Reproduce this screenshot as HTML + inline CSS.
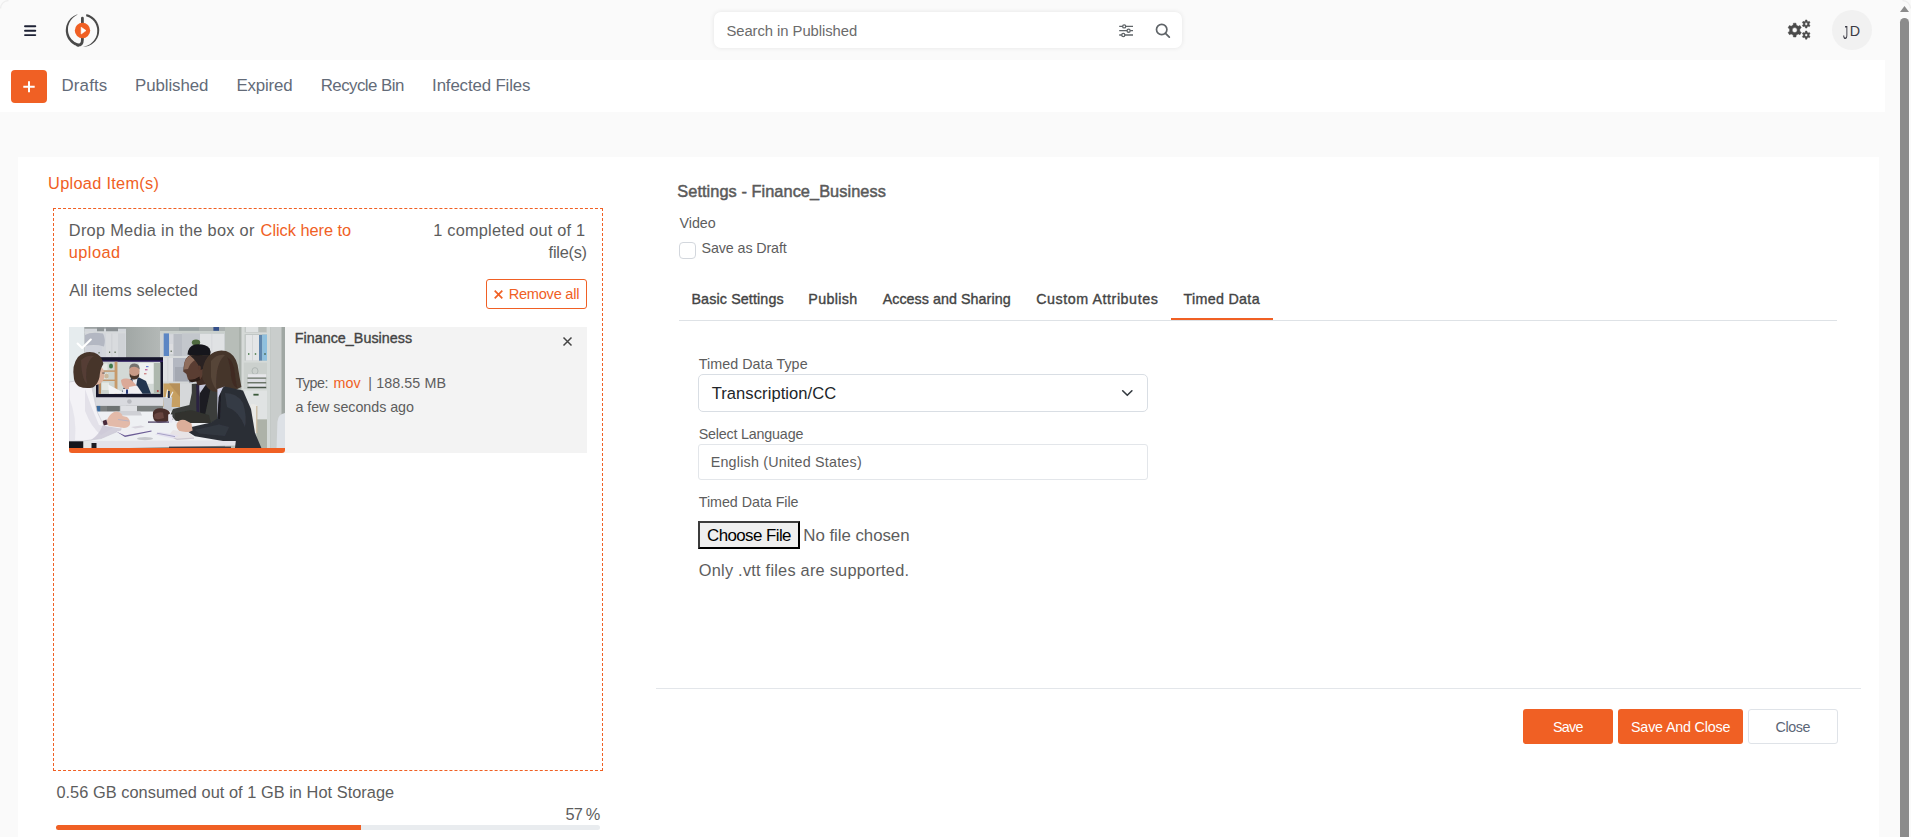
<!DOCTYPE html>
<html lang="en">
<head>
<meta charset="utf-8">
<title>Upload Item(s)</title>
<style>
*{box-sizing:border-box;margin:0;padding:0}
html,body{width:1911px;height:837px;overflow:hidden;background:#fafafa}
body{position:relative;font-family:"Liberation Sans","DejaVu Sans",sans-serif;color:#5d5d5d;font-size:16px}
.a,.t{position:absolute}
.t{white-space:nowrap;line-height:20px;height:20px}
svg{position:absolute;overflow:visible}
#search{left:714px;top:12px;width:468px;height:36px;background:#fff;border-radius:7px;box-shadow:0 0 5px rgba(0,0,0,.09)}
#avatar{left:1832px;top:10px;width:40px;height:40px;border-radius:50%;background:#f1f1f1}
#nav{left:0;top:60px;width:1885px;height:52px;background:#fff}
#plus{left:11px;top:70px;width:36px;height:33px;background:#f06024;border-radius:4px}
#card{left:18px;top:157px;width:1861px;height:680px;background:#fff}
#drop{left:53px;top:208px;width:550px;height:563px;border:1px dashed #f06024}
#item{left:69px;top:327px;width:518px;height:126px;background:#f3f3f3}
#thumbbar{left:69px;top:448px;width:216px;height:5px;background:#f06024;border-radius:0 0 3px 3px}
#rmall{left:486px;top:279px;width:101px;height:30px;border:1px solid #f06024;border-radius:3px;background:#fff}
#bar{left:56px;top:825px;width:544px;height:5px;border-radius:3px;background:#e9ecef}
#barfill{left:56px;top:825px;width:305px;height:5px;border-radius:3px 0 0 3px;background:#f06024}
#tabline{left:679px;top:320px;width:1158px;height:1px;background:#dee2e6}
#tabact{left:1171px;top:318px;width:102px;height:2px;background:#f06024}
.box{background:#fff;border:1px solid #d9dee4;border-radius:5px}
#hr{left:656px;top:688px;width:1205px;height:1px;background:#e3e6ea}
.btn{top:709px;height:35px;border-radius:3px;background:#f06024}
#sbthumb{left:1900px;top:18px;width:9px;height:830px;border-radius:5px;background:#8b8b8b}
</style>
</head>
<body>
<!-- header -->
<svg style="left:24px;top:25px" width="13" height="12" viewBox="0 0 13 12"><g stroke="#1e2235" stroke-width="1.9" stroke-linecap="round"><path d="M1 1.3H11.3M1 5.7H11.3M1 10.1H11.3"/></g></svg>
<svg style="left:60px;top:10px" width="46" height="40" viewBox="60 10 46 40"><path d="M86.5 14.1L87.7 14.4L88.8 14.8L89.9 15.3L90.9 15.9L91.9 16.5L92.9 17.2L93.8 18.0L94.6 18.8L95.4 19.7L96.1 20.6L96.7 21.6L97.3 22.6L97.8 23.7L98.3 24.8L98.6 25.9L98.9 27.1L99.1 28.2L99.2 29.4L99.2 30.6L99.1 31.8L99.0 32.9L98.8 34.1L98.5 35.2L98.1 36.3L97.6 37.4L97.1 38.5L96.4 39.5L95.8 40.4L95.0 41.4L94.2 42.2L93.3 43.0L92.4 43.7L91.4 44.4L90.4 45.0L89.4 45.5L88.3 46.0L87.1 46.3L86.0 46.6L84.8 46.8L83.7 47.0L83.6 46.7L84.8 46.4L85.9 46.1L87.0 45.7L88.0 45.3L89.0 44.8L90.0 44.2L90.9 43.5L91.7 42.8L92.5 42.0L93.2 41.2L93.9 40.4L94.6 39.5L95.2 38.6L95.7 37.7L96.1 36.7L96.5 35.7L96.8 34.7L97.0 33.7L97.1 32.6L97.2 31.6L97.2 30.5L97.2 29.5L97.1 28.5L96.9 27.5L96.6 26.4L96.3 25.5L95.9 24.5L95.5 23.6L94.9 22.7L94.4 21.8L93.7 21.0L93.0 20.3L92.3 19.6L91.5 18.9L90.6 18.3L89.8 17.8L88.9 17.3L87.9 16.9L87.0 16.6L86.0 16.3Z" fill="#4a4a4a"/><path d="M77.3 14.4L76.3 14.8L75.3 15.2L74.3 15.7L73.4 16.3L72.5 16.9L71.7 17.6L70.8 18.3L70.1 19.1L69.4 20.0L68.7 20.8L68.1 21.8L67.6 22.7L67.2 23.7L66.8 24.7L66.4 25.8L66.2 26.8L66.0 27.9L65.9 29.0L65.8 30.1L65.8 31.2L65.9 32.3L66.1 33.3L66.3 34.4L66.6 35.5L67.0 36.5L67.4 37.5L67.9 38.5L68.5 39.4L69.1 40.3L69.8 41.1L70.5 42.0L71.3 42.7L72.2 43.4L73.0 44.1L74.0 44.7L74.9 45.2L75.9 45.6L76.9 46.0L78.0 46.4L79.0 46.6L79.6 43.9L78.7 43.7L77.8 43.4L77.0 43.1L76.1 42.8L75.3 42.3L74.5 41.9L73.8 41.3L73.1 40.8L72.4 40.1L71.7 39.5L71.1 38.8L70.6 38.0L70.1 37.3L69.6 36.4L69.2 35.6L68.9 34.7L68.6 33.8L68.3 32.9L68.2 32.0L68.0 31.1L68.0 30.1L68.0 29.2L68.0 28.2L68.1 27.2L68.2 26.3L68.5 25.3L68.8 24.4L69.1 23.5L69.5 22.6L70.0 21.7L70.5 20.8L71.0 20.0L71.7 19.2L72.3 18.4L73.1 17.7L73.9 17.0L74.7 16.4L75.6 15.8L76.5 15.3L77.5 14.8Z" fill="#4a4a4a"/><path d="M82.4 18.2V39.8Q82.4 45.4 77.6 45.2" stroke="#4a4a4a" stroke-width="2.8" stroke-linecap="round" fill="none"/><circle cx="82.5" cy="30.5" r="7.7" fill="#f06024"/><path d="M81.2 27.2L86 30.6L81.2 34Z" fill="#fff" stroke="#fff" stroke-width="0.6" stroke-linejoin="round"/></svg>
<div id="search" class="a"></div>
<svg style="left:1116px;top:22px" width="58" height="18" viewBox="1116 22 58 18"><g stroke="#5f6468" stroke-width="1.3" fill="none"><path d="M1119.2 26.4H1133M1119.2 30.7H1133M1119.2 35H1133"/><circle cx="1124.2" cy="26.4" r="1.55" fill="#fff"/><circle cx="1128.6" cy="30.7" r="1.55" fill="#fff"/><circle cx="1123.3" cy="35" r="1.55" fill="#fff"/></g><circle cx="1161.7" cy="29.5" r="5.2" stroke="#5f6468" stroke-width="1.7" fill="none"/><path d="M1165.5 33.4L1169.3 37.1" stroke="#5f6468" stroke-width="1.8" stroke-linecap="round"/></svg>
<svg style="left:1785px;top:18px" width="28" height="24" viewBox="1785 18 28 24"><path d="M1793.20 25.12L1793.39 23.22L1796.01 23.22L1796.20 25.12L1798.26 26.31L1800.00 25.53L1801.31 27.80L1799.76 28.91L1799.76 31.29L1801.31 32.40L1800.00 34.67L1798.26 33.89L1796.20 35.08L1796.01 36.98L1793.39 36.98L1793.20 35.08L1791.14 33.89L1789.40 34.67L1788.09 32.40L1789.64 31.29L1789.64 28.91L1788.09 27.80L1789.40 25.53L1791.14 26.31ZM1792.20 30.10a2.5 2.5 0 1 0 5.0 0a2.5 2.5 0 1 0 -5.0 0ZM1805.33 21.13L1805.43 19.97L1806.97 19.97L1807.07 21.13L1808.25 21.81L1809.30 21.32L1810.07 22.65L1809.12 23.31L1809.12 24.69L1810.07 25.35L1809.30 26.68L1808.25 26.19L1807.07 26.87L1806.97 28.03L1805.43 28.03L1805.33 26.87L1804.15 26.19L1803.10 26.68L1802.33 25.35L1803.28 24.69L1803.28 23.31L1802.33 22.65L1803.10 21.32L1804.15 21.81ZM1804.80 24.00a1.4 1.4 0 1 0 2.8 0a1.4 1.4 0 1 0 -2.8 0ZM1805.33 32.23L1805.43 31.07L1806.97 31.07L1807.07 32.23L1808.25 32.91L1809.30 32.42L1810.07 33.75L1809.12 34.41L1809.12 35.79L1810.07 36.45L1809.30 37.78L1808.25 37.29L1807.07 37.97L1806.97 39.13L1805.43 39.13L1805.33 37.97L1804.15 37.29L1803.10 37.78L1802.33 36.45L1803.28 35.79L1803.28 34.41L1802.33 33.75L1803.10 32.42L1804.15 32.91ZM1804.80 35.10a1.4 1.4 0 1 0 2.8 0a1.4 1.4 0 1 0 -2.8 0Z" fill="#4a4a4a" fill-rule="evenodd" stroke="#4a4a4a" stroke-width="0.5" stroke-linejoin="round"/></svg>
<div id="avatar" class="a"></div>

<!-- nav -->
<div id="nav" class="a"></div>
<div id="plus" class="a"></div>
<svg style="left:23px;top:81px" width="12" height="12" viewBox="0 0 12 12"><path d="M6 0.3V11.3M0.3 5.8H11.7" stroke="#fff" stroke-width="2" fill="none"/></svg>

<!-- card -->
<div id="card" class="a"></div>
<div id="drop" class="a"></div>
<div id="rmall" class="a"></div>
<svg style="left:494px;top:289.5px" width="9" height="9" viewBox="0 0 9 9"><path d="M0.7 0.7L8.3 8.3M8.3 0.7L0.7 8.3" stroke="#f06024" stroke-width="1.7" fill="none"/></svg>
<div id="item" class="a"></div>
<svg style="left:69px;top:327px" width="216" height="121" viewBox="0 0 216 121"><defs><filter id="bl" x="-5%" y="-5%" width="110%" height="110%"><feGaussianBlur stdDeviation="0.7"/></filter><linearGradient id="wg" x1="0" x2="1" y1="0" y2="0"><stop offset="0" stop-color="#a1a7a5"/><stop offset="1" stop-color="#b3b8b6"/></linearGradient><clipPath id="cp"><rect x="0" y="0" width="216" height="121"/></clipPath></defs><g clip-path="url(#cp)"><rect width="216" height="121" fill="#8d9492"/><g filter="url(#bl)"><rect x="0" y="0" width="216" height="121" fill="#8d9492"/><rect x="0" y="0" width="15.5" height="121" fill="#e6ecee"/><rect x="15.5" y="0" width="41.5" height="80" fill="#d3d6db"/><rect x="15.5" y="0" width="41.5" height="1.8" fill="#9da3a4"/><rect x="28" y="0.5" width="7" height="4.0" fill="#8e9496"/><rect x="37" y="0.5" width="12" height="4.0" fill="#8b9093"/><rect x="15.5" y="4.5" width="41.5" height="1.8" fill="#d6d9db"/><rect x="37" y="6.5" width="12" height="23.5" fill="#d9dbde"/><rect x="42.6" y="6.5" width="0.6" height="23.5" fill="#c6c8cc"/><rect x="49" y="6.5" width="7" height="23.5" fill="#cfd2d6"/><path d="M16 8Q22 4.5 34 6.5Q37 12 35 19.5Q26 17 16 19Z" fill="#b3b7c2"/><rect x="17" y="19" width="16" height="11" fill="#d0d3db"/><rect x="40" y="24.5" width="1.2" height="1.5" fill="#5a6a55"/><rect x="45.5" y="24.5" width="1.2" height="1.5" fill="#5a6a55"/><rect x="29.5" y="25" width="1.1" height="1.5" fill="#5a6a55"/><rect x="57" y="0" width="34" height="31" fill="url(#wg)"/><rect x="91" y="0" width="65" height="90" fill="#cdd1d3"/><rect x="91" y="0" width="65" height="4" fill="#aab0af"/><rect x="144.4" y="0" width="5.6" height="3.8" fill="#34508a"/><rect x="110" y="0.4" width="20" height="3.2" fill="#9aa3a4"/><rect x="91" y="4" width="65" height="2.4" fill="#c9cfcc"/><rect x="94.7" y="6.4" width="5.3" height="22.6" fill="#5b86c4"/><path d="M100 7.5L109 6.8L106.5 17L101 17Z" fill="#d5d7dc"/><rect x="100.5" y="17" width="4.0" height="10" fill="#dcdde0"/><rect x="104.5" y="7" width="8.5" height="22" fill="#b9bdc4"/><rect x="101.6" y="23.5" width="1.2" height="1.5" fill="#5a6a55"/><rect x="113" y="6.4" width="18" height="22.6" fill="#c3c7cc"/><rect x="131" y="7" width="24" height="20" fill="#e0e2e4"/><rect x="142.6" y="7" width="0.6" height="20" fill="#cfd1d4"/><ellipse cx="127" cy="15.5" rx="4.2" ry="3" fill="#4f6b3f"/><rect x="91" y="29" width="65" height="2" fill="#d7dadb"/><rect x="94" y="31" width="10" height="24" fill="#dfe0e3"/><rect x="98.6" y="31" width="0.6" height="24" fill="#c9cbcf"/><rect x="104" y="31" width="14" height="24" fill="#b3b7c1"/><rect x="106" y="40" width="18" height="16" fill="#a4a8b2"/><rect x="91" y="54.5" width="29" height="2.0" fill="#d3d6d7"/><rect x="94.4" y="56.5" width="16.6" height="23.5" fill="#c7a062"/><path d="M100 56.5L111 56.5L111 70Z" fill="#b6905a"/><rect x="111" y="56.5" width="13" height="27.5" fill="#d6d8da"/><rect x="156" y="0" width="16.4" height="121" fill="#b7bdb8"/><rect x="170" y="0" width="2.4" height="121" fill="#a9b0aa"/><rect x="172.4" y="0" width="28.0" height="121" fill="#d6dad8"/><rect x="175.6" y="0" width="22.4" height="5.6" fill="#c3c8c6"/><rect x="177" y="0" width="12" height="5" fill="#dfe2e2"/><rect x="190" y="0" width="7" height="5" fill="#b9beba"/><rect x="175.6" y="7.2" width="22.4" height="26.4" fill="#bcc2c0"/><rect x="176.8" y="8" width="13.2" height="25.6" fill="#e4e6e7"/><rect x="183.2" y="8" width="0.6" height="25.6" fill="#c9cccd"/><rect x="190" y="8" width="3.2" height="25.6" fill="#5f86ad"/><rect x="193.2" y="7.6" width="5.4" height="26.0" fill="#8fc0de"/><rect x="179" y="26.2" width="1.4" height="1.6" fill="#4a7a4a"/><rect x="185.8" y="26.2" width="1.4" height="1.6" fill="#4a7a4a"/><rect x="195.2" y="26.2" width="1.6" height="1.6" fill="#4a6a5a"/><rect x="174.8" y="35.6" width="23.2" height="26.4" fill="#cbd0cd"/><ellipse cx="186" cy="44" rx="3" ry="3.4" fill="none" stroke="#aab0ae" stroke-width="0.8"/><rect x="179" y="47.2" width="18.2" height="3.3" fill="#e6e6ea"/><rect x="178.4" y="50.6" width="18.8" height="1.0" fill="#5a6358"/><rect x="179" y="52" width="17" height="3" fill="#dcdde2"/><rect x="178.4" y="55.2" width="18.8" height="1.2" fill="#566054"/><rect x="179.5" y="56.8" width="17.0" height="2.8" fill="#e2e2e8"/><rect x="178.4" y="59.8" width="18.8" height="1.4" fill="#4a5448"/><rect x="175.6" y="63.6" width="22.4" height="28.8" fill="#e0e3e3"/><rect x="184.4" y="66.8" width="5.2" height="1.8" fill="#3a5a3a"/><rect x="175.6" y="92.4" width="22.4" height="28.6" fill="#adb2a8"/><rect x="175.6" y="92.4" width="12.0" height="28.6" fill="#c9cdc9"/><rect x="200.4" y="0" width="15.6" height="121" fill="#a0a7a3"/><rect x="198" y="0" width="3.5" height="121" fill="#d4d9d7"/><rect x="201.5" y="0" width="11.0" height="121" fill="#cdd2d0" opacity="0.9"/><path d="M207.6 121L208.4 95Q209 87 216 86L216 121Z" fill="#dde1e6"/><path d="M181.6 77.5Q185 76 188 78.5L188 106L183 106Z" fill="#e9e9e6"/><rect x="187.2" y="79" width="1.2" height="27" fill="#c9b79c"/><rect x="27" y="78.5" width="67" height="6.5" fill="#7c8080"/><rect x="28" y="78.5" width="3.2" height="6.5" fill="#3b6a9c"/><rect x="38" y="79" width="12" height="5.5" fill="#6d7272"/><path d="M28 84.4L170 84.4L170 100L166.8 113.5L166.8 117.5L24 121L18 121L22.4 114Z" fill="#eef0f3"/><path d="M22.4 114L166.8 113.2L166.8 118.4L60 121L20 121Z" fill="#e3e3ea"/><rect x="100" y="119.6" width="62" height="1.4" fill="#3a3a44"/><rect x="0" y="113" width="14.5" height="8" fill="#15151d"/><rect x="14.5" y="108" width="8.5" height="13" fill="#e4e6e8"/><rect x="22.5" y="116" width="5.0" height="5" fill="#1b1b24"/><rect x="27" y="30.2" width="67" height="40.4" fill="#15122b"/><rect x="27" y="33.4" width="67" height="1.6" fill="#2d1a5c"/><rect x="29.8" y="34.8" width="61.5" height="32.0" fill="#d3d9d6"/><rect x="29.8" y="34.8" width="19.0" height="32.0" fill="#cdd4cf"/><rect x="45.6" y="34.8" width="2.8" height="32.0" fill="#c79a6b"/><rect x="29.8" y="34.8" width="2.2" height="32.0" fill="#b98d60"/><rect x="31" y="43.4" width="15" height="1.4" fill="#c29468"/><rect x="31" y="52.6" width="15" height="1.4" fill="#c29468"/><rect x="33" y="36.5" width="5.5" height="6.5" fill="#e6e9e6"/><rect x="33" y="46" width="6" height="6" fill="#dfe4e0"/><rect x="33" y="55.5" width="7" height="7.5" fill="#e4e8e4"/><ellipse cx="42" cy="39" rx="2" ry="2.6" fill="#3f7a4a"/><ellipse cx="37.5" cy="49" rx="2.2" ry="2.6" fill="#c9b79a"/><rect x="69.6" y="36" width="15.2" height="20.8" fill="#eef0f0"/><rect x="77" y="39" width="2.5" height="1.2" fill="#6a7fd0"/><rect x="76" y="42" width="2.5" height="1.4" fill="#c46aa0"/><rect x="75" y="46" width="2.5" height="1.4" fill="#d08a8a"/><rect x="84.8" y="36" width="6.5" height="30.8" fill="#aeb8ae"/><ellipse cx="88.8" cy="64" rx="1" ry="1" fill="#b03a3a"/><path d="M62.4 51L70 50.5L77 54L82 66.8L52 66.8L56 58Z" fill="#24344f"/><path d="M63.5 51.5L68.5 51.2L67 60L64 60Z" fill="#e8e8ee"/><ellipse cx="65.4" cy="44.4" rx="5.2" ry="7.4" fill="#c99a86"/><path d="M60.2 42Q60.5 36.6 65.6 36.6Q70.6 36.8 70.8 42.5Q68 39.5 65 39.8Q62 39.8 60.2 42Z" fill="#75726e"/><path d="M60.6 46.5Q62 49 65.4 49Q68.6 49 70.2 46.5L70 49.5Q68 52.6 65.4 52.6Q62.4 52.6 60.8 49.5Z" fill="#4a342b"/><path d="M52 53Q56 50.5 62 52.5L67 58Q68 62 64 63.5L56 62Q52 58 52 53Z" fill="#dba998"/><path d="M39.2 57.5L56.8 66.8L40 66.8Z" fill="#f1f2f4"/><rect x="53.6" y="62" width="6.4" height="4.8" fill="#e9e9f0"/><rect x="57" y="62.5" width="2" height="4.3" fill="#2a3a78"/><rect x="62" y="62.5" width="2" height="4.3" fill="#2a3a78"/><path d="M60 60L68 58.5L73.6 66.8L60 66.8Z" fill="#f0eef2"/><rect x="27" y="70.4" width="67" height="8.4" fill="#d9dadf"/><ellipse cx="60.4" cy="74.5" rx="2.3" ry="2.3" fill="#b9bac0"/><rect x="51.2" y="78.8" width="16.8" height="5.8" fill="#dfe0e4"/><path d="M50.4 84.4L71.2 84.4L73 88.4L49 88.4Z" fill="#cfd0d5"/><path d="M94 70L103.2 70L102.4 83.5L95 83.5Z" fill="#c4c8cf"/><path d="M96.5 71L98 62.5L99 62.8L98 71Z" fill="#eceef2"/><path d="M100 71L103.5 64.5L104.4 65L101.6 71Z" fill="#eceef2"/><rect x="99" y="64" width="1.8" height="7" fill="#2c3550"/><path d="M122.8 57L149.2 55L150 92L142 96L122 96L106 93.5L100 91L104 82L120.4 78L122.8 66Z" fill="#3a3e3a"/><path d="M129 55L139 54L137 68L131 70Z" fill="#c4c6d8"/><path d="M127.2 57L130.2 57L130.6 88L127.4 88Z" fill="#2a2440"/><path d="M131 66L138 56L142 60L136 88L131 88Z" fill="#1d1d20"/><path d="M106 86L122 83L140 88L142 96L122 96L106 93.5Z" fill="#30332f"/><path d="M126 50L137 46L138.5 57L128.5 58.5Z" fill="#3e2920"/><path d="M114.6 40Q115.5 30 122 27.5L133 27L135 40Q135.5 50 129 53.8Q122 55 119 52.6L117.4 47L114.2 44.6Z" fill="#5a3e33"/><path d="M115.4 36Q117 29.5 123 28L126 33Q121 36 119 42L115 42.5Z" fill="#8f6d5c"/><path d="M120 52.6Q125 53.5 130.5 49.5L131 53Q126 56 120.4 54.5Z" fill="#2a1a16"/><path d="M118.5 27.5Q119 19.5 126 17.6Q136 16.4 140.6 21.5Q142.6 25 141 28.5L128 29Q122 28.6 118.5 27.5Z" fill="#15151a"/><path d="M121 28.5L141 28Q141.5 36 137 41L131.5 43Q129 35 121 28.5Z" fill="#2a2320"/><ellipse cx="130.4" cy="41" rx="1.5" ry="2.6" fill="#5a3a2e"/><path d="M84 85Q86 80.6 92 81.2Q99 81.6 101 86L101 93.5Q96 96.4 88 95.4Q83 93.5 84 85Z" fill="#4a2f2b"/><path d="M85 88Q88 84.5 94 85.4L95 91Q90 93 85.5 91.5Z" fill="#67453f"/><rect x="99.2" y="87.4" width="4.2" height="8.2" fill="#e6e6f0"/><rect x="79" y="94.4" width="21" height="1.4" fill="#5b5070"/><path d="M100.5 86.5L108 95.5L107 96.2L99.8 87.2Z" fill="#e8e8f0"/><path d="M133.5 52Q132 38 139 29.5Q147 21.5 157 24Q166 27 168.6 38Q170.5 50 172.4 60Q166 64.5 158 62.6Q150 66 144 64.5Q138 62 136.5 57Z" fill="#45352c"/><path d="M142 34Q148 26.5 156 28Q150 33 148 44Q146.5 55 147.5 63Q143.5 58 142 50Z" fill="#6a5445" opacity="0.5"/><path d="M158 30Q165 34 166 46Q167 56 168.5 61Q163.5 60 162 50Q161.5 38 158 30Z" fill="#3f2b22" opacity="0.8"/><path d="M148.4 62L155.6 59.6L152 92L148.4 92Z" fill="#cfd0e6"/><path d="M155.6 59.6L174 63.6L182 82L186 106L192.4 121L166 121L166.8 114L154 114L126 109.2L119.6 105.2L120.4 100.4L142 95.6L148.4 91.6L150.5 68L154 60.4Z" fill="#2b2e36"/><path d="M156 66Q168 66 174 76Q178 90 176 100Q170 84 158 80Z" fill="#3a3e48" opacity="0.8"/><path d="M126 103L150 97.5L160 100L156 109L130 106.5Z" fill="#353943" opacity="0.8"/><path d="M148.4 91.6L149.6 70L152 66L151 92Z" fill="#1a1b22"/><path d="M107.6 97Q110 91.6 116 93L122.5 96.5L123.6 103.5Q118 106.6 111 104.5Q107 102 107.6 97Z" fill="#dcae9a"/><path d="M104 103L120 105.5L125 110.5L108 111.6L100 108Z" fill="#e7e3e6"/><path d="M100 108L108 111.6L125 110.5L125 111.8L108 113L100 109.2Z" fill="#cfc9d2"/><path d="M0 55L10 53.5L22.4 58L28 84.4L33.6 96.4L52 99.6L52 103L32 111.6L14.4 114L0 114Z" fill="#f3f2f6" stroke="#cdcbd6" stroke-width="0.7"/><path d="M16 62Q22 80 30 98L44 101L32 108Q22 100 16 84Z" fill="#dcdae4" opacity="0.7"/><path d="M0 70Q8 90 6 113L0 113Z" fill="#dedce6" opacity="0.6"/><path d="M33.6 98.5L52 101.6L52 103L32 111.6L22 113Q30 108 33.6 98.5Z" fill="#c9c6d4" opacity="0.8"/><path d="M26 40Q32 38 34.6 43L35.4 50Q34 56 29 57.5L24 59L22 50Z" fill="#dcb39f"/><rect x="33.2" y="45.5" width="2.6" height="1.1" fill="#6b5a55"/><path d="M5 52Q2.5 38 9 30Q16 23.5 25 25.5Q33 28 34.4 37Q31 42 30.5 50Q29 57 24 60.5Q16 62 10 59.5Q6 57 5 52Z" fill="#46342c"/><path d="M12 33Q18 27.5 25 29Q19 33 17.5 42Q16.5 50 18 57Q12.5 52 12 33Z" fill="#5e463a" opacity="0.6"/><path d="M38.4 92Q42 85.4 47 84.6Q52.5 85 53.6 89L58 90Q62 93 60.8 98Q58 102 52 100.6L40 99Q36.6 96.5 38.4 92Z" fill="#e3baa9"/><path d="M33.6 94L37.4 92.6L38.6 97.5L34.8 98.6Z" fill="#4a2b3a"/><path d="M49 92L60 93.6L60 94.4L49 93Z" fill="#b9b2c2"/><path d="M47.2 104.5L74 101.2L82.4 103.5L56 108.6Z" fill="#f0eff4"/><path d="M47.2 104.5L56 108.6L82.4 103.5L82.6 104.6L56 110Z" fill="#6b5b95"/><path d="M62 100L72 98.4L76 100L66 101.6Z" fill="#d9d6de"/><ellipse cx="76" cy="111.6" rx="8" ry="1.7" fill="#c6c7cd"/><path d="M128 106L146 112L140 115L122 109Z" fill="#d9d5e4" opacity="0.0"/><path d="M90 105L110 108.5L104 111.5L86 107.5Z" fill="#e2dfee"/><path d="M88 106.2L106 109.6" fill=" none" stroke="#8d86b5" stroke-width="0.7"/><path d="M8.6 16.6L13.2 21L21.8 12.6" fill="none" stroke="#fff" stroke-width="2.1" stroke-linecap="round" stroke-linejoin="round"/></g></g></svg>
<div id="thumbbar" class="a"></div>
<svg style="left:563px;top:337px" width="9" height="9" viewBox="0 0 9 9"><path d="M0.5 0.5L8.5 8.5M8.5 0.5L0.5 8.5" stroke="#444" stroke-width="1.5" fill="none"/></svg>
<div id="bar" class="a"></div>
<div id="barfill" class="a"></div>

<!-- settings -->
<div class="a box" style="left:679px;top:242px;width:17px;height:17px;border-radius:4px;border-color:#d3d7dd"></div>
<div id="tabline" class="a"></div>
<div id="tabact" class="a"></div>
<div class="a box" style="left:698px;top:374px;width:450px;height:38px"></div>
<svg style="left:1122px;top:390px" width="11" height="7" viewBox="0 0 11 7"><path d="M0.7 0.8L5.3 5.3L9.9 0.8" stroke="#343a40" stroke-width="1.6" fill="none" stroke-linecap="round" stroke-linejoin="round"/></svg>
<div class="a box" style="left:698px;top:444px;width:450px;height:36px;border-radius:3px;border-color:#e3e6ea"></div>
<div class="a" style="left:698px;top:521px;width:102px;height:28px;background:#efefef;border:2px solid #000;border-top-color:#3c3c3c;border-left-color:#3c3c3c"></div>
<div id="hr" class="a"></div>
<div class="a btn" style="left:1523px;width:90px"></div>
<div class="a btn" style="left:1618px;width:125px"></div>
<div class="a btn" style="left:1748px;width:90px;background:#fff;border:1px solid #dfe3e8"></div>

<svg style="left:0;top:0" width="10" height="10" viewBox="0 0 10 10"><path d="M0.6 8.5A7.9 7.9 0 0 1 8.5 0.6" stroke="#eeeeee" stroke-width="1.3" fill="none"/></svg>
<svg style="left:1901px;top:0" width="10" height="10" viewBox="0 0 10 10"><path d="M1.5 0.6A7.9 7.9 0 0 1 9.4 8.5" stroke="#eeeeee" stroke-width="1.3" fill="none"/></svg>
<!-- scrollbar -->
<svg style="left:1900px;top:6px" width="9" height="6" viewBox="0 0 9 6"><path d="M4.5 0L9 6H0Z" fill="#8b8b8b"/></svg>
<div id="sbthumb" class="a"></div>

<div class="t" style="left:726.40px;top:21.0px;font-size:14.82px;color:#6b6b6b;letter-spacing:-0.051px;">Search in Published</div>
<div class="t" style="left:1843.00px;top:23.0px;font-size:17.6px;color:#3b3b45;letter-spacing:0.000px;transform:scaleX(0.58);transform-origin:0 0;">J</div>
<div class="t" style="left:1849.70px;top:21.0px;font-size:14.31px;color:#3b3b45;letter-spacing:0.000px;">D</div>
<div class="t" style="left:61.50px;top:75.5px;font-size:16.86px;color:#636b78;letter-spacing:0.153px;">Drafts</div>
<div class="t" style="left:135.00px;top:75.5px;font-size:16.86px;color:#636b78;letter-spacing:-0.084px;">Published</div>
<div class="t" style="left:236.40px;top:75.5px;font-size:16.86px;color:#636b78;letter-spacing:-0.148px;">Expired</div>
<div class="t" style="left:320.70px;top:75.5px;font-size:16.86px;color:#636b78;letter-spacing:-0.544px;">Recycle Bin</div>
<div class="t" style="left:432.10px;top:75.5px;font-size:16.86px;color:#636b78;letter-spacing:-0.149px;">Infected Files</div>
<div class="t" style="left:48.10px;top:173.0px;font-size:16.35px;color:#f06024;letter-spacing:0.282px;">Upload Item(s)</div>
<div class="t" style="left:68.80px;top:220.0px;font-size:16.35px;color:#5d5d5d;letter-spacing:0.290px;">Drop Media in the box or</div>
<div class="t" style="left:260.60px;top:220.0px;font-size:16.35px;color:#f06024;letter-spacing:-0.020px;">Click here to</div>
<div class="t" style="left:68.80px;top:242.0px;font-size:16.35px;color:#f06024;letter-spacing:0.442px;">upload</div>
<div class="t" style="left:433.30px;top:220.0px;font-size:16.35px;color:#5d5d5d;letter-spacing:0.194px;">1 completed out of 1</div>
<div class="t" style="left:548.60px;top:242.0px;font-size:16.35px;color:#5d5d5d;letter-spacing:-0.251px;">file(s)</div>
<div class="t" style="left:69.20px;top:280.0px;font-size:16.35px;color:#5d5d5d;letter-spacing:0.090px;">All items selected</div>
<div class="t" style="left:508.70px;top:284.0px;font-size:14.61px;color:#f06024;letter-spacing:-0.259px;">Remove all</div>
<div class="t" style="left:294.75px;top:328.0px;font-size:14.31px;color:#444;letter-spacing:0.035px;-webkit-text-stroke:0.36px currentColor;">Finance_Business</div>
<div class="t" style="left:295.40px;top:373.0px;font-size:14.31px;color:#5d5d5d;letter-spacing:-0.474px;">Type:</div>
<div class="t" style="left:333.60px;top:373.0px;font-size:14.31px;color:#f06024;letter-spacing:0.020px;">mov</div>
<div class="t" style="left:368.30px;top:373.0px;font-size:14.31px;color:#5d5d5d;letter-spacing:0.080px;">| 188.55 MB</div>
<div class="t" style="left:295.40px;top:397.0px;font-size:14.31px;color:#5d5d5d;letter-spacing:-0.042px;">a few seconds ago</div>
<div class="t" style="left:56.40px;top:782.0px;font-size:16.35px;color:#5d5d5d;letter-spacing:0.039px;">0.56 GB consumed out of 1 GB in Hot Storage</div>
<div class="t" style="left:565.40px;top:804.0px;font-size:16.35px;color:#5d5d5d;letter-spacing:-0.807px;">57 %</div>
<div class="t" style="left:677.35px;top:181.0px;font-size:16.35px;color:#5a5a5a;letter-spacing:0.052px;-webkit-text-stroke:0.48px currentColor;">Settings - Finance_Business</div>
<div class="t" style="left:679.60px;top:213.0px;font-size:14.31px;color:#5d5d5d;letter-spacing:-0.064px;">Video</div>
<div class="t" style="left:701.60px;top:238.0px;font-size:14.31px;color:#5d5d5d;letter-spacing:-0.120px;">Save as Draft</div>
<div class="t" style="left:691.45px;top:289.0px;font-size:14.31px;color:#444;letter-spacing:0.127px;-webkit-text-stroke:0.36px currentColor;">Basic Settings</div>
<div class="t" style="left:808.35px;top:289.0px;font-size:14.31px;color:#444;letter-spacing:0.310px;-webkit-text-stroke:0.36px currentColor;">Publish</div>
<div class="t" style="left:882.65px;top:289.0px;font-size:14.31px;color:#444;letter-spacing:0.047px;-webkit-text-stroke:0.36px currentColor;">Access and Sharing</div>
<div class="t" style="left:1036.15px;top:289.0px;font-size:14.31px;color:#444;letter-spacing:0.552px;-webkit-text-stroke:0.36px currentColor;">Custom Attributes</div>
<div class="t" style="left:1183.45px;top:289.0px;font-size:14.31px;color:#444;letter-spacing:0.310px;-webkit-text-stroke:0.36px currentColor;">Timed Data</div>
<div class="t" style="left:698.70px;top:354.0px;font-size:14.31px;color:#5d5d5d;letter-spacing:0.059px;">Timed Data Type</div>
<div class="t" style="left:711.70px;top:383.5px;font-size:16.56px;color:#212529;letter-spacing:0.069px;">Transcription/CC</div>
<div class="t" style="left:698.70px;top:424.0px;font-size:14.31px;color:#5d5d5d;letter-spacing:-0.190px;">Select Language</div>
<div class="t" style="left:710.70px;top:452.0px;font-size:14.31px;color:#5d5d5d;letter-spacing:0.216px;">English (United States)</div>
<div class="t" style="left:698.80px;top:492.0px;font-size:14.31px;color:#5d5d5d;letter-spacing:-0.044px;">Timed Data File</div>
<div class="t" style="left:707.00px;top:525.5px;font-size:16.86px;color:#000;letter-spacing:-0.548px;">Choose File</div>
<div class="t" style="left:803.30px;top:525.5px;font-size:16.86px;color:#5d5d5d;letter-spacing:-0.043px;">No file chosen</div>
<div class="t" style="left:698.80px;top:560.0px;font-size:16.35px;color:#5d5d5d;letter-spacing:0.233px;">Only .vtt files are supported.</div>
<div class="t" style="left:1553.00px;top:717.0px;font-size:14.31px;color:#fff;letter-spacing:-0.712px;">Save</div>
<div class="t" style="left:1631.00px;top:717.0px;font-size:14.31px;color:#fff;letter-spacing:-0.175px;">Save And Close</div>
<div class="t" style="left:1775.60px;top:717.0px;font-size:14.31px;color:#5b6677;letter-spacing:-0.425px;">Close</div>
</body>
</html>
